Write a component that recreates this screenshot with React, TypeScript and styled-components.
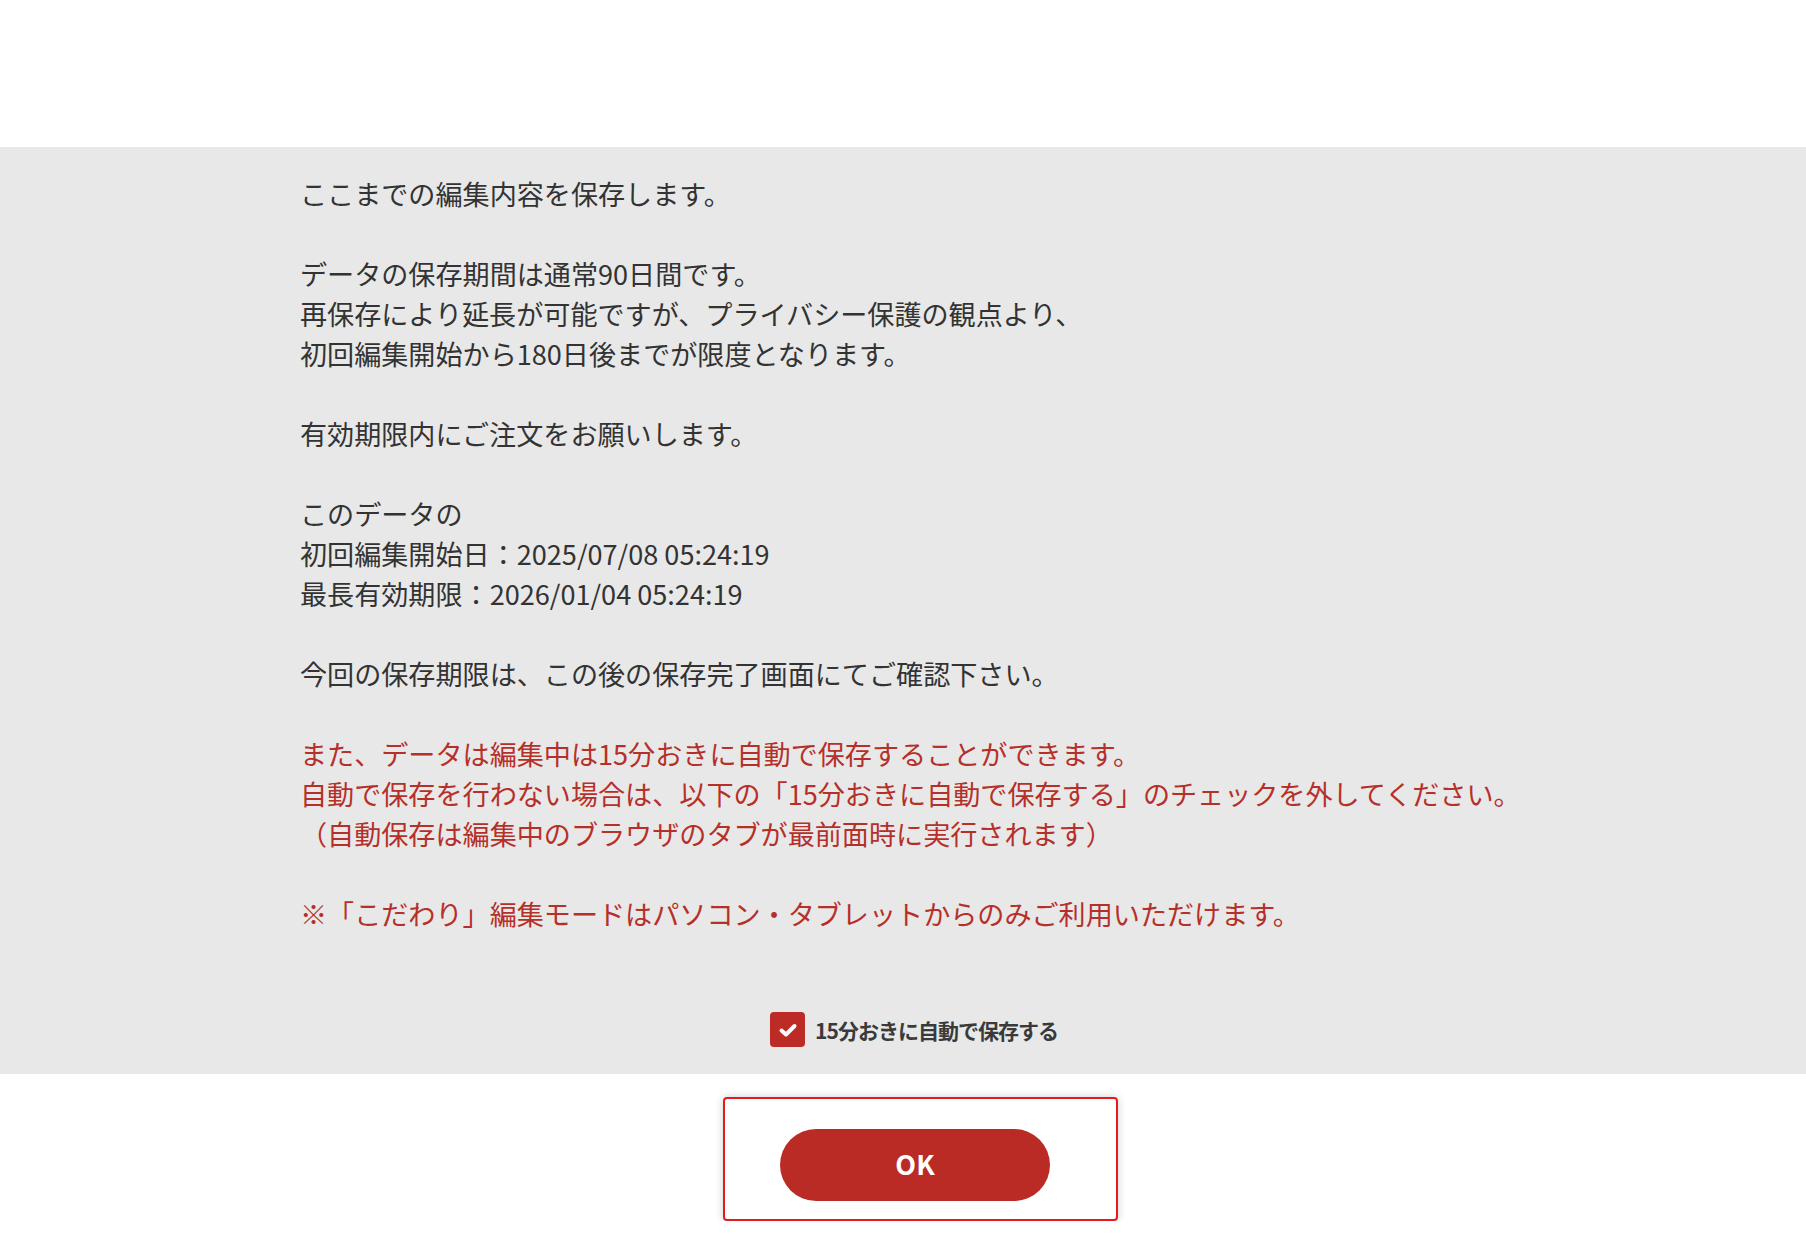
import React from "react";
import styled, { createGlobalStyle } from "styled-components";

const GlobalStyle = createGlobalStyle`
  body {
    margin: 0;
    background: #ffffff;
    font-family: "Noto Sans CJK JP", "Noto Sans", sans-serif;
  }
`;

const Page = styled.div`
  padding-top: 147px;
`;

const Panel = styled.section`
  background: #e8e8e8;
  padding: 27px 0 27px;
`;

const Message = styled.div`
  max-width: 1206px;
  margin: 0 auto;
  font-size: 27.1px;
  line-height: 40px;
  color: #333333;
`;

const Line = styled.p<{ $red?: boolean }>`
  margin: 0;
  min-height: 40px;
  white-space: nowrap;
  color: ${(p) => (p.$red ? "#b6302a" : "#333333")};
`;

const CheckRow = styled.label`
  display: flex;
  justify-content: center;
  align-items: center;
  gap: 10px;
  margin-top: 78px;
  padding-left: 22px;
  cursor: pointer;
`;

const CheckBox = styled.span`
  width: 35px;
  height: 35px;
  border-radius: 4px;
  background: #bd2b26;
  display: flex;
  align-items: center;
  justify-content: center;
`;

const CheckLabel = styled.span`
  font-size: 21px;
  font-weight: 700;
  color: #3a3a3a;
  letter-spacing: -1px;
`;

const Footer = styled.div`
  display: flex;
  justify-content: center;
  padding: 23px 0 0 35px;
`;

const Frame = styled.div`
  width: 395px;
  height: 124px;
  box-sizing: border-box;
  border: 2px solid #e31b1f;
  border-radius: 4px;
  box-shadow: 0 0 8px rgba(0, 0, 0, 0.2);
  padding: 30px 0 0 55px;
`;

const OkButton = styled.button`
  width: 270px;
  height: 72px;
  padding: 0 0 3px;
  border: none;
  border-radius: 36px;
  background: #bb2b25;
  color: #ffffff;
  font-family: "Noto Sans CJK JP", "Noto Sans", sans-serif;
  font-size: 27px;
  font-weight: 700;
  cursor: pointer;
`;

const lines: { text: string; red?: boolean }[] = [
  { text: "ここまでの編集内容を保存します。" },
  { text: "" },
  { text: "データの保存期間は通常90日間です。" },
  { text: "再保存により延長が可能ですが、プライバシー保護の観点より、" },
  { text: "初回編集開始から180日後までが限度となります。" },
  { text: "" },
  { text: "有効期限内にご注文をお願いします。" },
  { text: "" },
  { text: "このデータの" },
  { text: "初回編集開始日：2025/07/08 05:24:19" },
  { text: "最長有効期限：2026/01/04 05:24:19" },
  { text: "" },
  { text: "今回の保存期限は、この後の保存完了画面にてご確認下さい。" },
  { text: "" },
  { text: "また、データは編集中は15分おきに自動で保存することができます。", red: true },
  {
    text: "自動で保存を行わない場合は、以下の「15分おきに自動で保存する」のチェックを外してください。",
    red: true,
  },
  { text: "（自動保存は編集中のブラウザのタブが最前面時に実行されます）", red: true },
  { text: "" },
  { text: "※「こだわり」編集モードはパソコン・タブレットからのみご利用いただけます。", red: true },
];

const App = () => {
  return (
    <Page>
      <GlobalStyle />
      <Panel>
        <Message>
          {lines.map((l, i) => (
            <Line key={i} $red={l.red}>
              {l.text}
            </Line>
          ))}
        </Message>
        <CheckRow>
          <CheckBox>
            <svg width="20" height="16" viewBox="0 0 20 16">
              <path
                d="M3.5 8.5 L8 12.5 L16.5 4"
                fill="none"
                stroke="#ffffff"
                strokeWidth="4"
                strokeLinecap="round"
                strokeLinejoin="round"
              />
            </svg>
          </CheckBox>
          <CheckLabel>15分おきに自動で保存する</CheckLabel>
        </CheckRow>
      </Panel>
      <Footer>
        <Frame>
          <OkButton>OK</OkButton>
        </Frame>
      </Footer>
    </Page>
  );
};

export default App;
